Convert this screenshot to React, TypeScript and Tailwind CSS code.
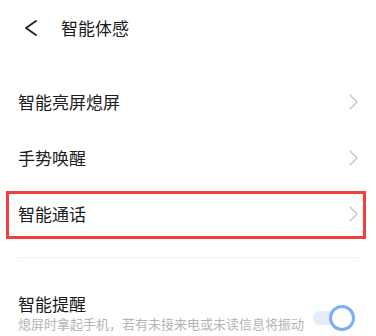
import React from 'react';

const font = { fontFamily: '"Noto Sans CJK SC", "Noto Sans", sans-serif' };

function ChevronRight() {
  return (
    <svg width="9" height="16" viewBox="0 0 9 16" fill="none" className="shrink-0">
      <polyline points="1,1 8,8 1,15" stroke="#c8c8c8" strokeWidth="1.5" strokeLinecap="round" strokeLinejoin="round" />
    </svg>
  );
}

function Row({ label, highlight }: { label: string; highlight?: boolean }) {
  return (
    <div className="relative h-[56px] flex items-center justify-between pl-[18px] pr-[18px]">
      <span className="text-[17px] leading-[24px] text-[#1c1c1c]">{label}</span>
      <ChevronRight />
      {highlight && (
        <div className="absolute top-[5px] left-[6px] right-[10px] h-[48px] border-[3px] border-[#f43d3d]" />
      )}
    </div>
  );
}

export default function App() {
  return (
    <div className="w-[376px] h-[336px] bg-white overflow-hidden" style={font}>
      {/* Header */}
      <div className="h-[55px] flex items-center pl-[24px]">
        <svg width="14" height="16" viewBox="0 0 14 16" fill="none">
          <polyline points="12,1 2,8 12,15" stroke="#222" strokeWidth="1.8" strokeLinecap="round" strokeLinejoin="round" />
        </svg>
        <span className="ml-[23px] text-[17px] leading-[24px] text-[#1c1c1c]">智能体感</span>
      </div>

      <div className="mt-[19px]">
        <Row label="智能亮屏熄屏" />
        <Row label="手势唤醒" />
        <Row label="智能通话" highlight />
      </div>

      <div className="mx-[17px] mt-[15px] h-px bg-[#f0f0f0]" />

      <div className="flex items-start justify-between pl-[18px] pr-[21px] mt-[35px]">
        <div className="w-[290px]">
          <div className="text-[17px] leading-[22px] text-[#1c1c1c]">智能提醒</div>
          <div className="text-[13px] leading-[18px] text-[#b4b4b4]">
            熄屏时拿起手机，若有未接来电或未读信息将振动提醒
          </div>
        </div>
        <div className="relative w-[42px] h-[26px] mt-[12px]">
          <div className="absolute left-0 top-[6px] w-[34px] h-[14px] rounded-full bg-[#e3edfd]" />
          <div className="absolute right-0 top-0 w-[26px] h-[26px] rounded-full bg-white border-[3px] border-[#78b0f4]" />
        </div>
      </div>
    </div>
  );
}
